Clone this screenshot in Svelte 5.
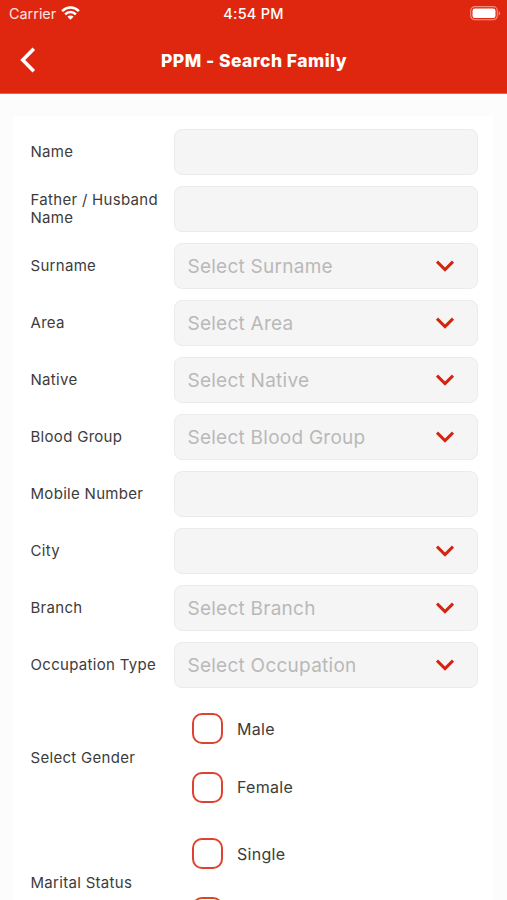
<script>
  const fields = [
    { label: 'Name' },
    { label: 'Father / Husband Name' },
    { label: 'Surname', select: true, hint: 'Select Surname' },
    { label: 'Area', select: true, hint: 'Select Area' },
    { label: 'Native', select: true, hint: 'Select Native' },
    { label: 'Blood Group', select: true, hint: 'Select Blood Group' },
    { label: 'Mobile Number' },
    { label: 'City', select: true, hint: '' },
    { label: 'Branch', select: true, hint: 'Select Branch' },
    { label: 'Occupation Type', select: true, hint: 'Select Occupation' }
  ];
  const groups = [
    { label: 'Select Gender', options: ['Male', 'Female'] },
    { label: 'Marital Status', options: ['Single', ''] }
  ];
</script>

<div class="screen">
  <header>
    <div class="status">
      <div class="carrier">
        <span>Carrier</span>
        <svg width="19" height="14" viewBox="0 0 19 14" fill="none" stroke="#fff" stroke-width="2.6">
          <path d="M1.1 5.1C6 0.3 13 0.3 17.9 5.1" />
          <path d="M4.1 8.4C7.3 5.4 11.7 5.4 14.9 8.4" />
          <path d="M9.5 13.7L6.4 10.7C8.3 9.1 10.7 9.1 12.6 10.7Z" fill="#fff" stroke="none" />
        </svg>
      </div>
      <span class="time">4:54 PM</span>
      <div class="battery">
        <svg width="31" height="15" viewBox="0 0 31 15">
          <rect x="0.7" y="0.7" width="26.6" height="13" rx="4" fill="none" stroke="#f18a7c" stroke-width="1.2" />
          <rect x="2.5" y="2.6" width="23" height="9.3" rx="2.2" fill="#fff" />
          <path d="M28.7 5v4.6c1.9-.8 1.9-3.8 0-4.6z" fill="#f18a7c" />
        </svg>
      </div>
    </div>
    <div class="nav">
      <svg class="back" width="16" height="26" viewBox="0 0 16 26" fill="none" stroke="#fff" stroke-width="3.6">
        <path d="M13.8 1.8L2.8 13L13.8 24.2" />
      </svg>
      <h1>PPM - Search Family</h1>
    </div>
  </header>

  <main>
    <div class="card">
      {#each fields as f}
        <div class="row">
          <span class="label">{f.label}</span>
          <div class="field">
            {#if f.select}
              <span class="hint">{f.hint}</span>
              <svg width="20" height="12" viewBox="0 0 20 12" fill="none" stroke="#d3260f" stroke-width="3">
                <path d="M2 1.6L10 9.6L18 1.6" />
              </svg>
            {/if}
          </div>
        </div>
      {/each}
      {#each groups as g}
        <div class="group">
          <span class="label">{g.label}</span>
          <div class="options">
            {#each g.options as o}
              <div class="option"><i class="box"></i><span>{o}</span></div>
            {/each}
          </div>
        </div>
      {/each}
    </div>
  </main>
</div>

<style>
  :global(body) { margin: 0; overflow: hidden; }
  .screen {
    width: 507px;
    height: 900px;
    overflow: hidden;
    background: #fcfcfc;
    font-family: Inter, "Liberation Sans", sans-serif;
    color: #3c3c3c;
  }
  header { height: 94px; box-sizing: border-box; background: #df270f; color: #fff; border-bottom: 1px solid #ea6352; }
  .status {
    display: grid;
    grid-template-columns: 1fr auto 1fr;
    align-items: center;
    height: 27px;
    padding: 0 6px 0 9px;
    font-size: 15px;
  }
  .carrier { display: flex; align-items: center; gap: 5px; color: #fde4e0; font-size: 14.4px; }
  .carrier svg { margin-top: -2px; }
  .time { font-size: 14.5px; font-weight: 500; letter-spacing: 0.25px; margin-left: -3px; }
  .battery { display: flex; justify-content: flex-end; }
  .nav { position: relative; height: 66px; display: flex; align-items: center; justify-content: center; }
  .back { position: absolute; left: 20px; top: 20px; }
  h1 { margin: 0; padding: 2px 0 0 1px; font-size: 17.5px; font-weight: 800; letter-spacing: 0.45px; line-height: 22px; }
  main { padding: 22px 14.5px 0 14px; }
  .card { height: 900px; background: #fff; padding: 7px 15px 0 16px; }
  .row, .group { display: flex; align-items: center; }
  .row { height: 57px; }
  .group { height: 125px; }
  .row + .group { margin-top: 2.5px; }
  .label { width: 143.5px; padding-left: 0.5px; flex: none; font-size: 15px; line-height: 18px; letter-spacing: 0.3px; }
  .field {
    flex: 1;
    height: 46px;
    box-sizing: border-box;
    border: 1.5px solid #ebebeb;
    border-radius: 8px;
    background: #f5f5f5;
    display: flex;
    align-items: center;
    justify-content: space-between;
    padding: 0 21.5px 0 12.5px;
  }
  .hint { font-size: 19px; letter-spacing: 0.25px; padding-top: 1px; color: #b9b9b9; }
  .options { padding-left: 18px; display: flex; flex-direction: column; gap: 27.5px; }
  .option { display: flex; align-items: center; gap: 14px; font-size: 16px; letter-spacing: 0.3px; line-height: 20px; }
  .box { width: 31px; height: 31px; box-sizing: border-box; border: 2px solid #dc4430; border-radius: 10px; }
</style>
